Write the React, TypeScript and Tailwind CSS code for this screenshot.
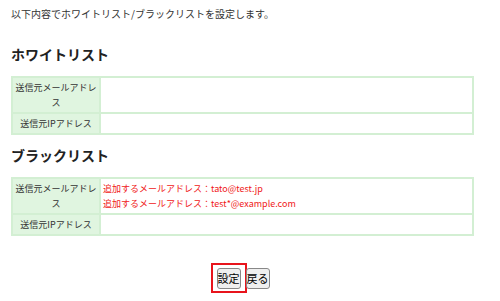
const font = { fontFamily: '"Noto Sans CJK JP", "Noto Sans", sans-serif' }

function ListTable({ rows }: { rows: { label: string; value?: string[] }[] }) {
  return (
    <table className="w-[463px] border-collapse text-[9px] leading-[15px]">
      <tbody>
        {rows.map((r, i) => (
          <tr key={i}>
            <td className="w-[88px] border-2 border-[#d3efd3] bg-[#e0f5e0] px-0 py-[2px] text-center text-[#333]">
              {r.label}
            </td>
            <td className="border-2 border-[#d3efd3] px-[2px] py-[2px] text-[#f01818]">
              {r.value?.map((v, j) => (
                <div key={j}>{v}</div>
              ))}
            </td>
          </tr>
        ))}
      </tbody>
    </table>
  )
}

export default function App() {
  return (
    <div className="h-[301px] w-[500px] overflow-hidden bg-white pl-[11px] pt-[7px] text-[#333]" style={font}>
      <p className="text-[10px] leading-[14px]">以下内容でホワイトリスト/ブラックリストを設定します。</p>

      <h2 className="mt-[23px] text-[14px] font-bold leading-[20px] text-[#222]">ホワイトリスト</h2>
      <div className="mt-[12px]">
        <ListTable rows={[{ label: '送信元メールアドレス', value: [] }, { label: '送信元IPアドレス' }]} />
      </div>

      <h2 className="mt-[10px] text-[14px] font-bold leading-[20px] text-[#222]">ブラックリスト</h2>
      <div className="mt-[12px]">
        <ListTable
          rows={[
            {
              label: '送信元メールアドレス',
              value: ['追加するメールアドレス：tato@test.jp', '追加するメールアドレス：test*@example.com'],
            },
            { label: '送信元IPアドレス' },
          ]}
        />
      </div>

      <div className="mt-[27px] flex justify-center pr-[31px]">
        <div className="flex items-center">
          <div className="border-2 border-[#e8141c] pb-[2px] pl-[4px] pr-[4px] pt-[3px]">
            <button className="block h-[21px] rounded-[3px] border border-[#888] bg-[#efefef] px-0 text-[11px] leading-[19px] text-black">
              設定
            </button>
          </div>
          <button className="-ml-[1px] h-[21px] rounded-[3px] border border-[#888] bg-[#efefef] px-0 text-[11px] leading-[19px] text-black">
            戻る
          </button>
        </div>
      </div>
    </div>
  )
}
